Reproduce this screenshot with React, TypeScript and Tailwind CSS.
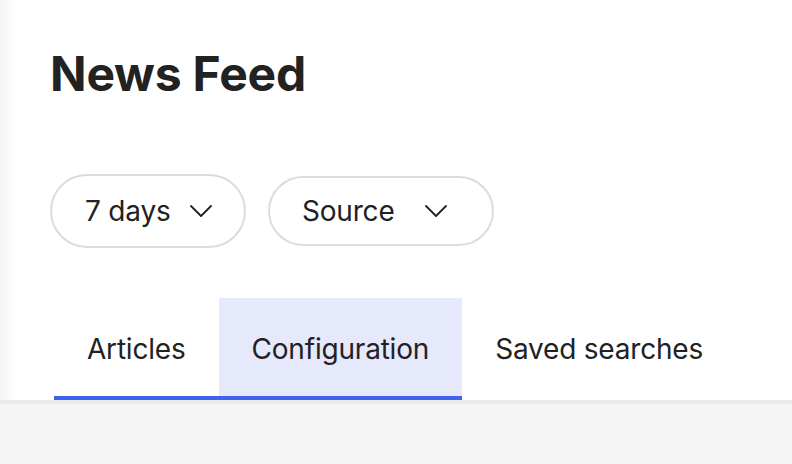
const tabs = ["Articles", "Configuration", "Saved searches"];

function Chevron() {
  return (
    <svg width="22" height="12" viewBox="0 0 22 12" fill="none" className="shrink-0">
      <polyline points="1,1 11,11 21,1" stroke="#222" strokeWidth="1.8" strokeLinecap="round" strokeLinejoin="round" />
    </svg>
  );
}

function FilterPill({ label, className }: { label: string; className: string }) {
  return (
    <button
      type="button"
      className={
        "flex items-center rounded-full border-2 border-[#dcdcdc] bg-white text-[28px] tracking-[-0.2px] text-[#222] " +
        className
      }
    >
      <span>{label}</span>
      <Chevron />
    </button>
  );
}

export default function App() {
  return (
    <div className="flex h-[464px] w-[792px] flex-col overflow-hidden bg-white font-['Inter',sans-serif] text-[#222]">
      <div className="flex flex-1 flex-col bg-gradient-to-r from-[#f5f5f5] via-white via-[2%] to-white pl-[50px]">
        <h1 className="mt-[46px] text-[48px] font-bold leading-[56px] tracking-[-0.2px] text-[#222]">
          News Feed
        </h1>

        <div className="mt-[72px] flex items-center gap-[22px]">
          <FilterPill label="7 days" className="h-[74px] w-[196px] gap-[19px] pl-[33px]" />
          <FilterPill label="Source" className="h-[70px] w-[226px] gap-[30px] pl-[32px]" />
        </div>

        <nav className="mt-[50px] flex pl-[4px]">
          {tabs.map((tab) => (
            <div
              key={tab}
              className={
                "flex h-[102px] items-center border-b-4 px-[33px] pt-[4px] text-[28px] tracking-[-0.2px] " +
                (tab === "Configuration"
                  ? "border-[#3f63ee] bg-[#e6e8fb]"
                  : tab === "Articles"
                    ? "border-[#3f63ee]"
                    : "border-transparent")
              }
            >
              {tab}
            </div>
          ))}
        </nav>
      </div>
      <div className="h-[64px] border-t-4 border-[#e9e9e9] bg-[#f5f5f5]" />
    </div>
  );
}
